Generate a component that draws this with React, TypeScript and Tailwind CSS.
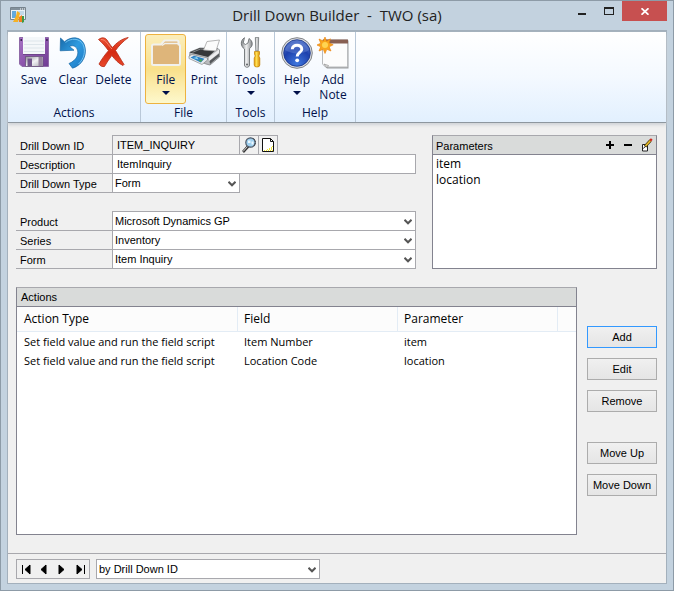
import type { ReactNode } from "react"

const formLabel =
  "w-24 shrink-0 border-b border-[#a8a8ad] pl-1 pt-px text-[11px] leading-[18px] whitespace-nowrap"
const segoe = "font-['Open_Sans','Noto_Sans',sans-serif]"

function SaveIcon() {
  return (
    <svg width="32" height="32" viewBox="0 0 32 32">
      <defs>
        <linearGradient id="disk" x1="0" y1="0" x2="1" y2="1">
          <stop offset="0" stopColor="#a774c4" />
          <stop offset="0.5" stopColor="#8d55ad" />
          <stop offset="1" stopColor="#6f3c93" />
        </linearGradient>
        <linearGradient id="shutter" x1="0" y1="0" x2="1" y2="1">
          <stop offset="0" stopColor="#8d8d95" />
          <stop offset="0.5" stopColor="#f2f2f4" />
          <stop offset="1" stopColor="#a9a9b0" />
        </linearGradient>
      </defs>
      <path d="M1.500 0.500H30.500V29.500H4L1.500 27Z" fill="url(#disk)" stroke="#8f6aa8" />
      <path d="M5 0H27V17H5Z" fill="#f4f7f9" />
      <path d="M6 4H26M6 7.500H26M6 11H26M6 14.500H26" stroke="#dde5ea" />
      <path d="M5 17.500H27" stroke="#6d4489" />
      <rect x="2.500" y="2" width="1.500" height="2" fill="#3f2356" />
      <rect x="28.200" y="2" width="1.500" height="2" fill="#3f2356" />
      <path d="M7.500 19.500H25V29.500H7.500Z" fill="url(#shutter)" stroke="#68507b" strokeWidth="0.800" />
      <path d="M9.500 21.500H14V29H9.500Z" fill="#71558b" />
      <path d="M20.500 20H24.500V29H20.500Z" fill="#96849f" />
    </svg>
  )
}

function ClearIcon() {
  return (
    <svg width="32" height="32" viewBox="0 0 32 32">
      <defs>
        <linearGradient id="undo" x1="0" y1="0" x2="1" y2="1">
          <stop offset="0" stopColor="#1769a8" />
          <stop offset="0.450" stopColor="#2f9be0" />
          <stop offset="1" stopColor="#1c78c4" />
        </linearGradient>
      </defs>
      <path
        d="M3.500 1L7.500 4.800C14 -1 23.500 -0.500 27 7C31 16 26.500 28 15.500 31.200L12 26.500C19.500 23.500 22.500 17 20 11.800C18 8.300 15 8.300 12.500 9.500L17 13.200L3.200 13.800Z"
        fill="url(#undo)"
        stroke="#1665a3"
        strokeWidth="0.700"
      />
      <path d="M8.500 5.500C14 0.800 22.500 1 26 7.500C29 14 27 22 21.500 27" fill="none" stroke="#7cc8f5" strokeWidth="0.900" />
    </svg>
  )
}

function DeleteIcon() {
  return (
    <svg width="32" height="32" viewBox="0 0 32 32">
      <defs>
        <linearGradient id="cross" x1="0" y1="0" x2="0" y2="1">
          <stop offset="0" stopColor="#ee5436" />
          <stop offset="0.500" stopColor="#d42a12" />
          <stop offset="1" stopColor="#e8492c" />
        </linearGradient>
      </defs>
      <path
        d="M1.500 2.500C5 0 8 0.500 10 3C12 6 13.500 8.500 15.500 10.500C19.500 6 24 2 31.300 0.500C26 4.500 21.500 9 18.500 13.500C21 17.500 23.500 22 27 27.500L26 28.500C21.500 26.500 18 22.500 14.800 18.500C12 22 9.500 26 7.500 29.500C5.500 30 3 29 2 27C4.500 22.500 8 17.500 11.500 13.700C9 10 5.500 6 1.500 2.500Z"
        fill="url(#cross)"
        stroke="#b52a14"
        strokeWidth="0.800"
      />
      <path d="M4 2.500C9 2 11.500 9 15 12" fill="none" stroke="#f58a70" strokeWidth="0.900" />
    </svg>
  )
}

function FolderIcon() {
  return (
    <svg width="32" height="32" viewBox="0 0 32 32">
      <path
        d="M3.500 7.500H11L14.500 3.500H27Q28.500 3.500 28.500 5V7.500Q30 7.500 30 9V26.500Q30 28 28.500 28H3.500Q2 28 2 26.500V9Q2 7.500 3.500 7.500Z"
        fill="#deb57a"
        stroke="#f1f1ee"
        strokeWidth="2"
        strokeLinejoin="round"
      />
      <path d="M12 8.500L15 6.500H28.500" fill="none" stroke="#f1f1ee" strokeWidth="1.500" />
    </svg>
  )
}

function PrintIcon() {
  return (
    <svg width="32" height="32" viewBox="0 0 32 32">
      <path d="M2 15L12 11L30 11.500L31.500 13V20L22 28L18 27L1.500 20Z" fill="#b9bbbd" stroke="#707376" strokeWidth="0.700" />
      <path d="M1.500 15.500L12 11L29 12L20 20Z" fill="#36383a" />
      <path d="M4.500 15.300L12.500 12L26 13" fill="none" stroke="#85888a" />
      <path d="M19 4.500L31.500 3L28 14L15.500 13Z" fill="#fbfbfb" stroke="#a3a3a3" strokeWidth="0.800" />
      <path d="M21 20L31 12.500V16L21 24Z" fill="#ededee" />
      <path d="M21.500 24L31 16.500V19.500L22 27Z" fill="#55585b" />
      <path d="M1 19L4 17.500L19.500 21V23L14 27.500L1 21.500Z" fill="#e5eaee" stroke="#777" strokeWidth="0.600" />
      <path d="M2.500 20.500L6 18.800L16.500 21.800L12.800 25.500Z" fill="#2a7fc4" />
      <path d="M5 21L9 20L10.500 22.500Z" fill="#8fd6ef" />
      <path d="M10.500 23.500L13 22L14.500 23.200L12.800 25Z" fill="#49a356" />
    </svg>
  )
}

function ToolsIcon() {
  return (
    <svg width="32" height="32" viewBox="0 0 32 32">
      <defs>
        <linearGradient id="steel" x1="0" y1="0" x2="1" y2="0">
          <stop offset="0" stopColor="#85888b" />
          <stop offset="0.450" stopColor="#f0f1f2" />
          <stop offset="1" stopColor="#85888b" />
        </linearGradient>
        <linearGradient id="grip" x1="0" y1="0" x2="1" y2="0">
          <stop offset="0" stopColor="#e59a00" />
          <stop offset="0.400" stopColor="#ffe054" />
          <stop offset="1" stopColor="#d88b00" />
        </linearGradient>
      </defs>
      <path
        d="M9.500 0.700L8.200 6L10.500 7.500L13 6L14 1.500C18 4 18.500 9 14.500 11.500V28C14.500 31 9.500 31 9.500 28V12C5.500 9.500 5 3.500 9.500 0.700Z"
        fill="url(#steel)"
        stroke="#606467"
        strokeWidth="0.800"
      />
      <circle cx="12" cy="27.500" r="1" fill="#5d6164" />
      <path d="M20.300 0.500H23.700L23.200 14H20.800Z" fill="url(#steel)" stroke="#606467" strokeWidth="0.600" />
      <path d="M19.500 14.500H24.500V17L23.800 19L24.800 21V28Q24.800 30 22 30Q19.200 30 19.200 28V21L20.200 19L19.500 17Z" fill="url(#grip)" stroke="#c08000" strokeWidth="0.700" />
    </svg>
  )
}

function HelpIcon() {
  return (
    <svg width="32" height="32" viewBox="0 0 32 32">
      <defs>
        <radialGradient id="ball" cx="0.500" cy="0.900" r="0.900">
          <stop offset="0" stopColor="#3f78de" />
          <stop offset="0.600" stopColor="#1d40ad" />
          <stop offset="1" stopColor="#5f7fd0" />
        </radialGradient>
      </defs>
      <circle cx="16" cy="16" r="15.300" fill="#dcdde0" stroke="#818487" strokeWidth="1" />
      <circle cx="16" cy="16" r="13.300" fill="url(#ball)" stroke="#173487" strokeWidth="0.800" />
      <path d="M4 13C6 3 26 3 28 13C22 17 12 18 4 13Z" fill="#7f9bde" opacity="0.350" />
      <path d="M11.300 12.200C11.300 6.800 20.800 6.800 20.800 12.200C20.800 15.400 16.200 15.600 16.200 19.600" fill="none" stroke="#fff" strokeWidth="3" />
      <circle cx="16.200" cy="23.300" r="1.900" fill="#fff" />
    </svg>
  )
}

function NoteIcon() {
  return (
    <svg width="32" height="32" viewBox="0 0 32 32">
      <path d="M6.500 3.500H31.500V31.500H10L6.500 28Z" fill="#9b9d9f" />
      <path d="M5.500 3H30.500V30H8.500L5.500 27Z" fill="#fcfcfc" stroke="#b9bbbd" />
      <path d="M6 2.500H31V6.500H6Z" fill="#875f52" />
      <path d="M7 27L11.500 28.500L10 31Z" fill="#dedede" stroke="#888" strokeWidth="0.600" />
      <path
        d="M8 0L9.600 4.200L13.400 1.800L12.200 6L16.200 7.800L12.200 9.800L14 14L9.800 12.300L8 16.500L6.300 12.300L2 14L3.700 9.800L0 8L3.700 6.200L2 2L6.300 4Z"
        fill="#f9a51b"
        stroke="#e87b08"
        strokeWidth="0.600"
      />
      <circle cx="8" cy="8" r="3" fill="#ffd451" />
    </svg>
  )
}

function AppIcon() {
  return (
    <svg width="16" height="16" viewBox="0 0 16 16">
      <path d="M0.500 0.500H15.500V12.500H0.500Z" fill="#e9f1f7" stroke="#76838d" />
      <path d="M1 1H15V3H1Z" fill="#82909b" />
      <path d="M10 2H11M12 2H13M14 2H15" stroke="#fff" />
      <path d="M2 4H6V11H2Z" fill="#63a9dc" />
      <path d="M8 5H14M8 7H14" stroke="#9cc0db" />
      <path d="M3 15L6 9L7 4L10 6L8 15Z" fill="#f5b125" />
      <path d="M9 10L12 8V15H9Z" fill="#f07f20" />
      <path d="M12 9H14V15L12 16Z" fill="#3f9b43" />
    </svg>
  )
}

function LookupIcon() {
  return (
    <svg width="16" height="16" viewBox="0 0 16 16">
      <path d="M2 15L7.500 9" stroke="#333" strokeWidth="2.600" />
      <path d="M2 14.500L7 9" stroke="#d8d8d8" />
      <circle cx="9.500" cy="5.500" r="4.700" fill="#9fd0ef" stroke="#4b5563" strokeWidth="1.200" />
      <path d="M7 3.500H9.500V6H7ZM10.500 4.500H12.500V7.500H10.500Z" fill="#edf8ff" />
      <path d="M12.500 1.500Q16 5 13 9" fill="none" stroke="#30343a" strokeDasharray="1.500 1" />
    </svg>
  )
}

function NewNoteIcon() {
  return (
    <svg width="14" height="16" viewBox="0 0 14 16">
      <path d="M1.500 1.500H9.500L12.500 4.500V14.500H1.500Z" fill="#fff" stroke="#111" />
      <path d="M9.500 1.500V4.500H12.500" fill="none" stroke="#111" />
      <path d="M3 13.500H12M6 12.500H12M8 11.500H12M10 10.500H12M11 9.500H12" stroke="#eee33a" strokeDasharray="1 1" />
    </svg>
  )
}

function PencilNoteIcon() {
  return (
    <svg width="12" height="14" viewBox="0 0 12 14">
      <path d="M1.500 6.500H6.500V13H1.500Z" fill="#fff" stroke="#222" />
      <path d="M4 8.500L9.500 2.500" stroke="#3d3310" strokeWidth="3" />
      <path d="M4.500 8L9.500 2.500" stroke="#e5b926" strokeWidth="1.800" />
      <path d="M9.200 2.600L10.800 1" stroke="#d1281e" strokeWidth="2.400" />
      <path d="M2.500 10.500L4 8.500" stroke="#111" />
    </svg>
  )
}

function DownArrow() {
  return (
    <svg width="8" height="4" viewBox="0 0 8 4" className="mt-1">
      <path d="M0 0H8L4 4Z" fill="#00104a" />
    </svg>
  )
}

type RibbonButtonProps = {
  icon: ReactNode
  label: string
  width: string
  active?: boolean
  menu?: boolean
}

function RibbonButton({ icon, label, width, active, menu }: RibbonButtonProps) {
  const look = active
    ? "border-[#edb23f] bg-linear-to-b from-[#fbeebb] via-[#f9e08a] to-[#fdf8cc]"
    : "border-transparent"
  return (
    <button className={`flex h-[70px] flex-col items-center rounded-[3px] border pt-0.5 ${width} ${look}`}>
      {icon}
      <span className="mt-[3px] text-center text-[12px] leading-[15px]">{label}</span>
      {menu && <DownArrow />}
    </button>
  )
}

function RibbonGroup({ title, children, className = "" }: { title: string; children: ReactNode; className?: string }) {
  return (
    <div className={`flex flex-col border-r border-[#b9c8d8] pt-0.5 ${className}`}>
      <div className="flex">{children}</div>
      <div className="text-center text-[12px] leading-[17px]">{title}</div>
    </div>
  )
}

function Dropdown({ id, value, label, className = "" }: { id: string; value: string; label?: string; className?: string }) {
  return (
    <div className={`relative h-5 ${className}`}>
      <select
        id={id}
        aria-label={label}
        defaultValue={value}
        className="block h-full w-full appearance-none border border-[#a8a8ad] bg-white pr-4 pl-0.5 text-[11px] leading-[16px] outline-none"
      >
        <option>{value}</option>
      </select>
      <svg width="8" height="6" viewBox="0 0 8 6" className="pointer-events-none absolute top-2 right-1">
        <path d="M0.500 0.800L4 4.300L7.500 0.800" fill="none" stroke="#555" strokeWidth="2" />
      </svg>
    </div>
  )
}

const sources = [
  { id: "product", label: "Product", value: "Microsoft Dynamics GP" },
  { id: "series", label: "Series", value: "Inventory" },
  { id: "form", label: "Form", value: "Item Inquiry" },
]

const actions = [
  { type: "Set field value and run the field script", field: "Item Number", parameter: "item" },
  { type: "Set field value and run the field script", field: "Location Code", parameter: "location" },
]

const navButtons = [
  { label: "First record", path: "M1.500 1V10M9 1V10L4 5.500Z" },
  { label: "Previous record", path: "M7 1V10L2 5.500Z" },
  { label: "Next record", path: "M2 1V10L7 5.500Z" },
  { label: "Last record", path: "M9.500 1V10M2 1V10L7 5.500Z" },
]

function TitleBar() {
  return (
    <header className={`grid h-[29px] grid-cols-[1fr_auto_1fr] ${segoe}`}>
      <div className="pt-1.5 pl-[3px]">
        <AppIcon />
      </div>
      <h1 className="text-[15px] leading-[29px] whitespace-pre text-[#222]">{"Drill Down Builder  -  TWO (sa)"}</h1>
      <div className="flex h-5 justify-end">
        <button aria-label="Minimize" className="flex w-[27px] items-center justify-center">
          <svg width="10" height="10" viewBox="0 0 10 10">
            <path d="M1 7H9V9H1Z" fill="#222" />
          </svg>
        </button>
        <button aria-label="Maximize" className="flex w-[27px] items-center justify-center">
          <svg width="10" height="8" viewBox="0 0 10 8">
            <path d="M0 0H10V8H0ZM1 2V7H9V2Z" fill="#222" fillRule="evenodd" />
          </svg>
        </button>
        <button aria-label="Close" className="flex w-[45px] items-center justify-center bg-[#c75050]">
          <svg width="8" height="7" viewBox="0 0 8 7">
            <path d="M0.500 0.300L7.500 6.700M7.500 0.300L0.500 6.700" stroke="#fff" strokeWidth="1.800" />
          </svg>
        </button>
      </div>
    </header>
  )
}

function Ribbon() {
  return (
    <div className={`flex h-[91px] shrink-0 border-b border-[#8e979f] bg-linear-to-b from-white via-[#f4f9ff] to-[#e2f0fe] text-[#00104a] shadow-[0_2px_3px_#cfd3d7] ${segoe}`}>
      <RibbonGroup title="Actions" className="w-[133px] px-1.5">
        <RibbonButton icon={<SaveIcon />} label="Save" width="w-10" />
        <RibbonButton icon={<ClearIcon />} label="Clear" width="w-10" />
        <RibbonButton icon={<DeleteIcon />} label="Delete" width="w-[42px]" />
      </RibbonGroup>
      <RibbonGroup title="File" className="w-[86px] px-1">
        <RibbonButton icon={<FolderIcon />} label="File" width="w-[42px]" active menu />
        <RibbonButton icon={<PrintIcon />} label="Print" width="w-9" />
      </RibbonGroup>
      <RibbonGroup title="Tools" className="w-12 px-1">
        <RibbonButton icon={<ToolsIcon />} label="Tools" width="w-10" menu />
      </RibbonGroup>
      <RibbonGroup title="Help" className="w-[81px] px-1">
        <RibbonButton icon={<HelpIcon />} label="Help" width="w-9" menu />
        <RibbonButton icon={<NoteIcon />} label="Add Note" width="w-9" />
      </RibbonGroup>
    </div>
  )
}

function DetailsForm() {
  return (
    <form className="min-w-0 flex-1 pt-px">
      <div className="flex h-[19px]">
        <label htmlFor="drill-id" className={formLabel}>Drill Down ID</label>
        <input
          id="drill-id"
          defaultValue="ITEM_INQUIRY"
          className="-mt-px h-5 w-32 border border-[#a8a8ad] bg-[#f0f0f0] px-1 text-[11px] outline-none"
        />
        <button type="button" aria-label="Lookup" className="-mt-px -ml-px flex h-5 w-5 items-center justify-center border border-[#a8a8ad]">
          <LookupIcon />
        </button>
        <button type="button" aria-label="Note" className="-mt-px -ml-px flex h-5 w-5 items-center justify-center border border-[#a8a8ad]">
          <NewNoteIcon />
        </button>
      </div>
      <div className="flex h-[19px]">
        <label htmlFor="description" className={formLabel}>Description</label>
        <input
          id="description"
          defaultValue="ItemInquiry"
          className="-mt-px h-5 min-w-0 flex-1 border border-[#a8a8ad] bg-white px-1 text-[11px] outline-none"
        />
      </div>
      <div className="mb-[19px] flex h-[19px]">
        <label htmlFor="drill-type" className={formLabel}>Drill Down Type</label>
        <Dropdown id="drill-type" value="Form" className="-mt-px w-32" />
      </div>
      {sources.map((row) => (
        <div key={row.id} className="flex h-[19px]">
          <label htmlFor={row.id} className={formLabel}>{row.label}</label>
          <Dropdown id={row.id} value={row.value} className="-mt-px flex-1" />
        </div>
      ))}
    </form>
  )
}

function ParametersPanel() {
  return (
    <section className="flex w-[225px] shrink-0 flex-col border border-[#83838f] border-t-[#a8a8ad] bg-white">
      <div className="flex h-[19px] items-center border-b border-[#83838f] bg-[#d9dbda] pr-[3px] pl-[3px]">
        <h2 className="flex-1 pt-px text-[11px] leading-[18px]">Parameters</h2>
        <div className="flex gap-2">
          <button aria-label="Add parameter" className="flex w-2.5 items-center justify-center">
            <svg width="8" height="8" viewBox="0 0 8 8">
              <path d="M0 3H3V0H5V3H8V5H5V8H3V5H0Z" />
            </svg>
          </button>
          <button aria-label="Remove parameter" className="flex w-2.5 items-center justify-center">
            <svg width="8" height="8" viewBox="0 0 8 8">
              <path d="M0 3H8V5H0Z" />
            </svg>
          </button>
          <button aria-label="Edit parameter">
            <PencilNoteIcon />
          </button>
        </div>
      </div>
      <ul className={`px-[3px] pt-px text-[12px] leading-4 ${segoe}`}>
        <li>item</li>
        <li>location</li>
      </ul>
    </section>
  )
}

function ActionsPanel() {
  return (
    <section className="min-w-0 flex-1 border border-[#83838f] border-t-[#a8a8ad] bg-white">
      <h2 className="h-[19px] border-b border-[#83838f] bg-[#d9dbda] pl-1 text-[11px] leading-[18px]">Actions</h2>
      <table className={`w-full table-fixed border-separate border-spacing-0 text-left text-[12px] ${segoe}`}>
        <colgroup>
          <col />
          <col className="w-40" />
          <col className="w-40" />
          <col className="w-[18px]" />
        </colgroup>
        <thead>
          <tr className="h-[25px] bg-[#fcfcfc]">
            <th className="border-r border-b border-[#e3ecf5] pl-[7px] font-normal">Action Type</th>
            <th className="border-r border-b border-[#e3ecf5] pl-1.5 font-normal">Field</th>
            <th className="border-r border-b border-[#e3ecf5] pl-1.5 font-normal">Parameter</th>
            <td className="border-b border-[#e3ecf5]" />
          </tr>
        </thead>
        <tbody className="text-[11px]">
          {actions.map((action) => (
            <tr key={action.field} className="h-[19px] leading-[19px] whitespace-nowrap">
              <td className="pl-[7px]">{action.type}</td>
              <td className="pl-1.5">{action.field}</td>
              <td className="pl-1.5">{action.parameter}</td>
              <td />
            </tr>
          ))}
        </tbody>
      </table>
    </section>
  )
}

function SideButton({ label, className = "border-[#acacac]" }: { label: string; className?: string }) {
  return (
    <button className={`h-[22px] border bg-linear-to-b from-[#f0f0f0] to-[#e5e5e5] text-[11px] leading-[20px] whitespace-nowrap ${className}`}>
      {label}
    </button>
  )
}

export default function App() {
  return (
    <div className="flex min-h-screen flex-col border border-[#8d9ba7] bg-[#c3d2df] px-1.5 pb-1.5 font-['Liberation_Sans',Arial,sans-serif] text-black">
      <TitleBar />
      <div className="flex flex-1 flex-col border border-t-2 border-[#a3b0bc] bg-[#f0f0f0]">
        <Ribbon />
        <main className="flex flex-1 flex-col gap-[18px] pt-3 pr-[9px] pb-[18px] pl-2">
          <div className="flex gap-4">
            <DetailsForm />
            <ParametersPanel />
          </div>
          <div className="flex flex-1 gap-2.5">
            <ActionsPanel />
            <div className="flex w-[70px] shrink-0 flex-col gap-2.5 pt-[39px]">
              <SideButton label="Add" className="border-[#3399ff]" />
              <SideButton label="Edit" />
              <SideButton label="Remove" />
              <SideButton label="Move Up" className="mt-5 border-[#acacac]" />
              <SideButton label="Move Down" />
            </div>
          </div>
        </main>
        <footer className="flex gap-1.5 border-t border-[#a8a8ad] px-2 pt-[5px] pb-1">
          <div className="flex h-5 w-[74px] items-center justify-around border border-[#a8a8ad]">
            {navButtons.map((nav) => (
              <button key={nav.label} aria-label={nav.label}>
                <svg width="11" height="11" viewBox="0 0 11 11">
                  <path d={nav.path} fill="#000" stroke="#000" strokeWidth="1" />
                </svg>
              </button>
            ))}
          </div>
          <Dropdown id="sort-by" label="Sort by" value="by Drill Down ID" className="w-56" />
        </footer>
      </div>
    </div>
  )
}
